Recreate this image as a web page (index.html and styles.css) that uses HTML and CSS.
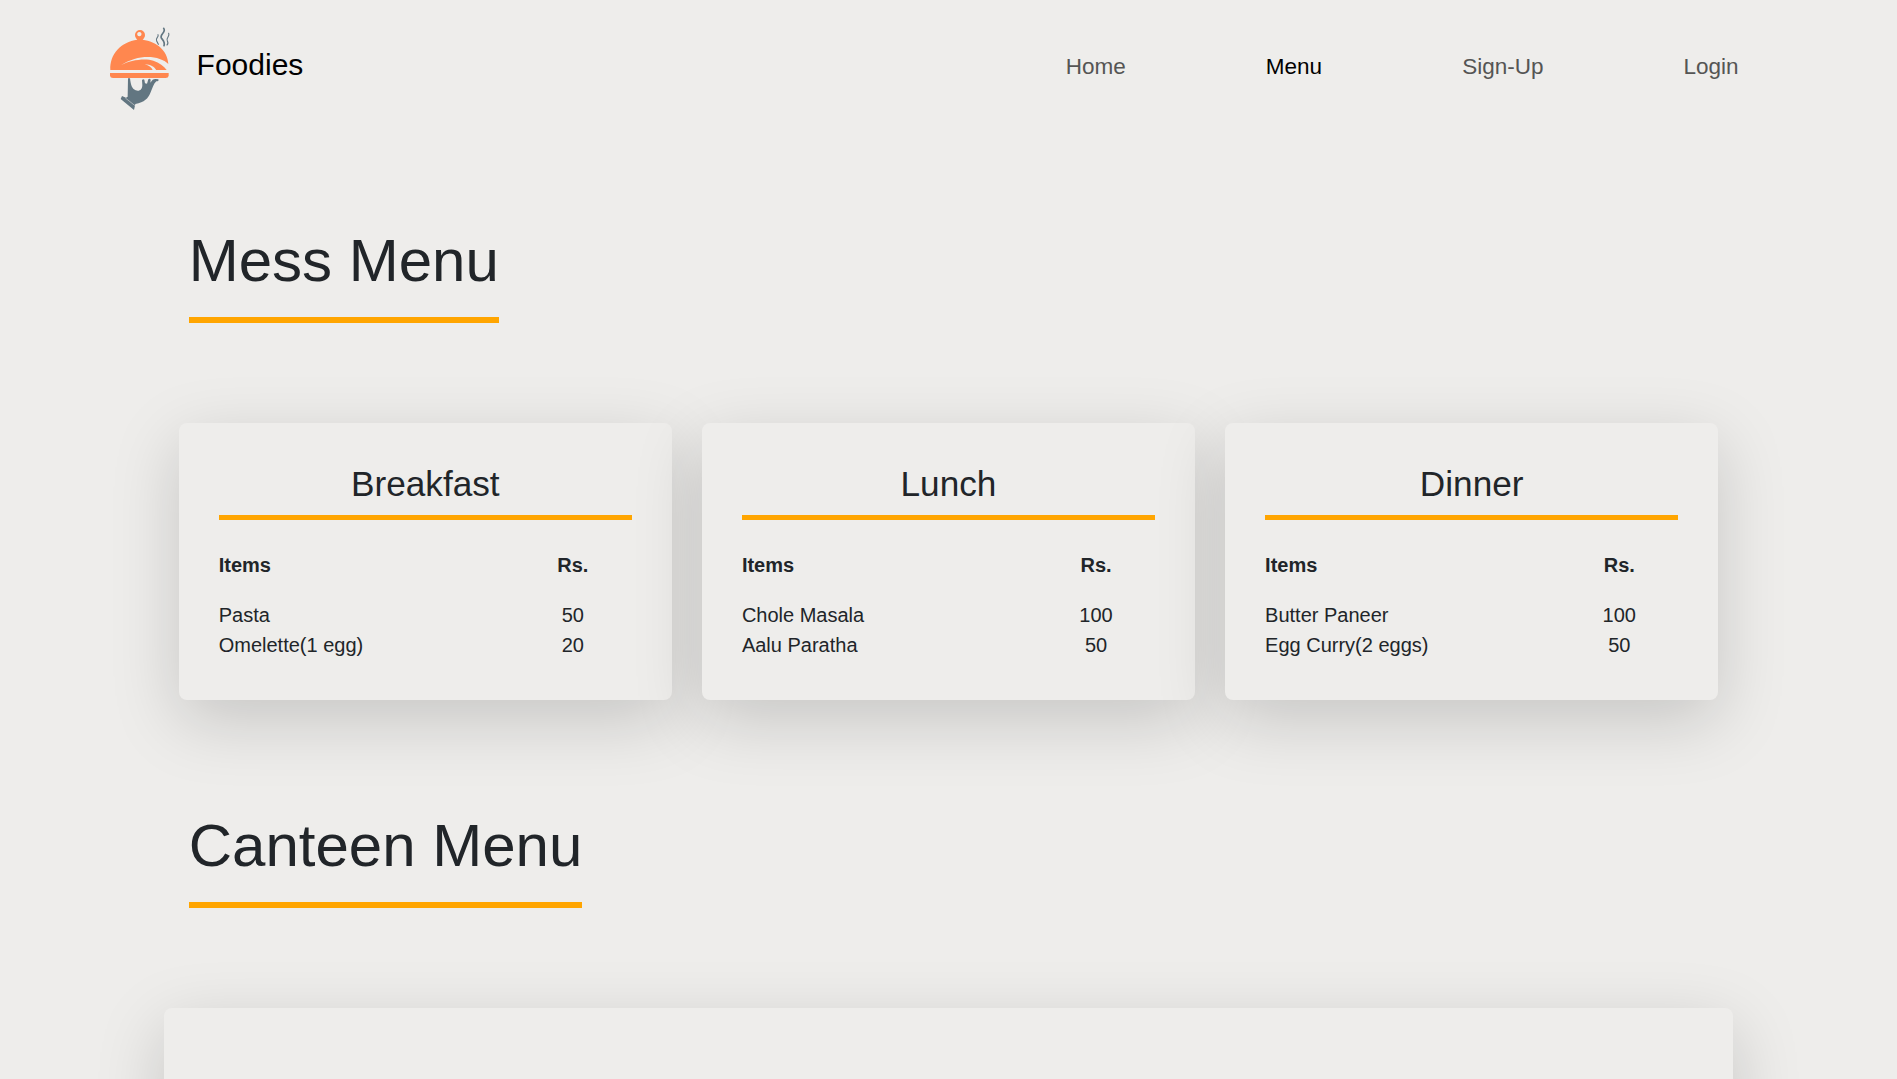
FILE: index.html
```html
<!DOCTYPE html>
<html lang="en">
<head>
<meta charset="utf-8">
<title>Foodies</title>
<link rel="stylesheet" href="styles.css">
</head>
<body>
<header class="navbar">
  <a class="brand" href="#">
    <svg class="logo" viewBox="0 0 240 285" aria-hidden="true">
      <g fill="#ff874f">
        <path fill-rule="evenodd" d="M112 59C108 55 105 51 105 45a15 15 0 0 1 30 0c0 6-3 10-7 14C170 65 203 91 205 132C180 106 115 100 63 136C90 120 135 114 160 122C178 128 192 138 200 150H31C29 101 63 66 112 59ZM118 36a6.5 6.5 0 1 0 .1 0Z"/>
        <path d="M30 159H206V167Q205 174 197 174H39Q31 174 30 167Z"/>
      </g>
      <path fill="#eeedeb" d="M134 133C152 134 163 140 169 151L158 150C154 142 147 137 134 133Z"/>
      <g fill="#627681">
        <path d="M84 175H90C92 194 96 207 107 211C118 215 127 209 127 195L126 181Q129 175 133 179L135 190L141 191L145 178Q149 174 152 179L151 188L158 179Q164 175 175 178Q178 184 169 184C161 191 158 203 151 219C144 235 134 247 106 252L102 270L62 237L66 228L78 233L83 230Z"/>
      </g>
      <path fill="none" stroke="#eeedeb" stroke-width="1.5" d="M76 234L105 257"/>
      <g fill="none" stroke="#627681" stroke-linecap="round">
        <path stroke-width="5" d="M191 25C200 37 178 43 184 54C190 62 196 67 192 77"/>
        <path stroke-width="3.4" d="M174 44C178 51 165 54 170 63L175 73M206 40C211 50 196 54 202 63Q206 70 201 75"/>
      </g>
    </svg>
    <span class="brand-name">Foodies</span>
  </a>
  <nav class="links">
    <a class="link" href="#">Home</a>
    <a class="link active" href="#">Menu</a>
    <a class="link" href="#">Sign-Up</a>
    <a class="link" href="#">Login</a>
  </nav>
</header>
<main class="content">
  <section class="section">
    <h1 class="section-title">Mess Menu</h1>
    <div class="cards">
      <article class="card">
        <h2 class="card-title">Breakfast</h2>
        <div class="row head"><span>Items</span><span class="price">Rs.</span></div>
        <div class="row"><span>Pasta</span><span class="price">50</span></div>
        <div class="row"><span>Omelette(1 egg)</span><span class="price">20</span></div>
      </article>
      <article class="card">
        <h2 class="card-title">Lunch</h2>
        <div class="row head"><span>Items</span><span class="price">Rs.</span></div>
        <div class="row"><span>Chole Masala</span><span class="price">100</span></div>
        <div class="row"><span>Aalu Paratha</span><span class="price">50</span></div>
      </article>
      <article class="card">
        <h2 class="card-title">Dinner</h2>
        <div class="row head"><span>Items</span><span class="price">Rs.</span></div>
        <div class="row"><span>Butter Paneer</span><span class="price">100</span></div>
        <div class="row"><span>Egg Curry(2 eggs)</span><span class="price">50</span></div>
      </article>
    </div>
  </section>
  <section class="section">
    <h1 class="section-title">Canteen Menu</h1>
    <div class="card canteen"></div>
  </section>
</main>
</body>
</html>
```
FILE: styles.css
```css
* { box-sizing: border-box; }
body {
  margin: 0;
  height: 1079px;
  overflow: hidden;
  background: #eeedeb;
  color: #212529;
  font: 20px/30px "Liberation Sans", Arial, sans-serif;
}
a { color: inherit; text-decoration: none; }
.navbar {
  display: flex;
  justify-content: space-between;
  height: 134px;
  padding: 20px 158.5px 0 100px;
}
.brand { display: flex; gap: 16.6px; color: #000; }
.logo { width: 80px; height: 95px; }
.brand-name { padding-top: 22px; font-size: 30px; line-height: 45px; }
.links { display: flex; gap: 140px; padding-top: 30px; }
.link { font-size: 22.5px; line-height: 34px; color: #555554; }
.link.active { color: #000; }
.content { width: 1569.6px; margin: 0 auto; }
.section { padding-top: 91px; }
.section-title {
  width: max-content;
  margin: 0 0 100px 25px;
  padding-bottom: 20px;
  border-bottom: 6px solid #ffa500;
  font-size: 60px;
  font-weight: 400;
  line-height: 72px;
}
.cards {
  display: grid;
  grid-template-columns: repeat(3, 1fr);
  gap: 30px;
  padding: 0 15px;
  margin-bottom: 19px;
}
.card {
  padding: 40px;
  border-radius: 8px;
  background: #eeedeb;
  box-shadow: 0 20px 68px rgba(0, 0, 0, .17);
}
.card-title {
  margin: 0 0 30px;
  padding-bottom: 10px;
  border-bottom: 5px solid #ffa500;
  font-size: 35.2px;
  font-weight: 400;
  line-height: 42px;
  text-align: center;
}
.row { display: grid; grid-template-columns: 5fr 2fr; }
.head { margin-bottom: 20px; font-weight: 700; }
.price { text-align: center; }
.canteen { height: 400px; }
```
